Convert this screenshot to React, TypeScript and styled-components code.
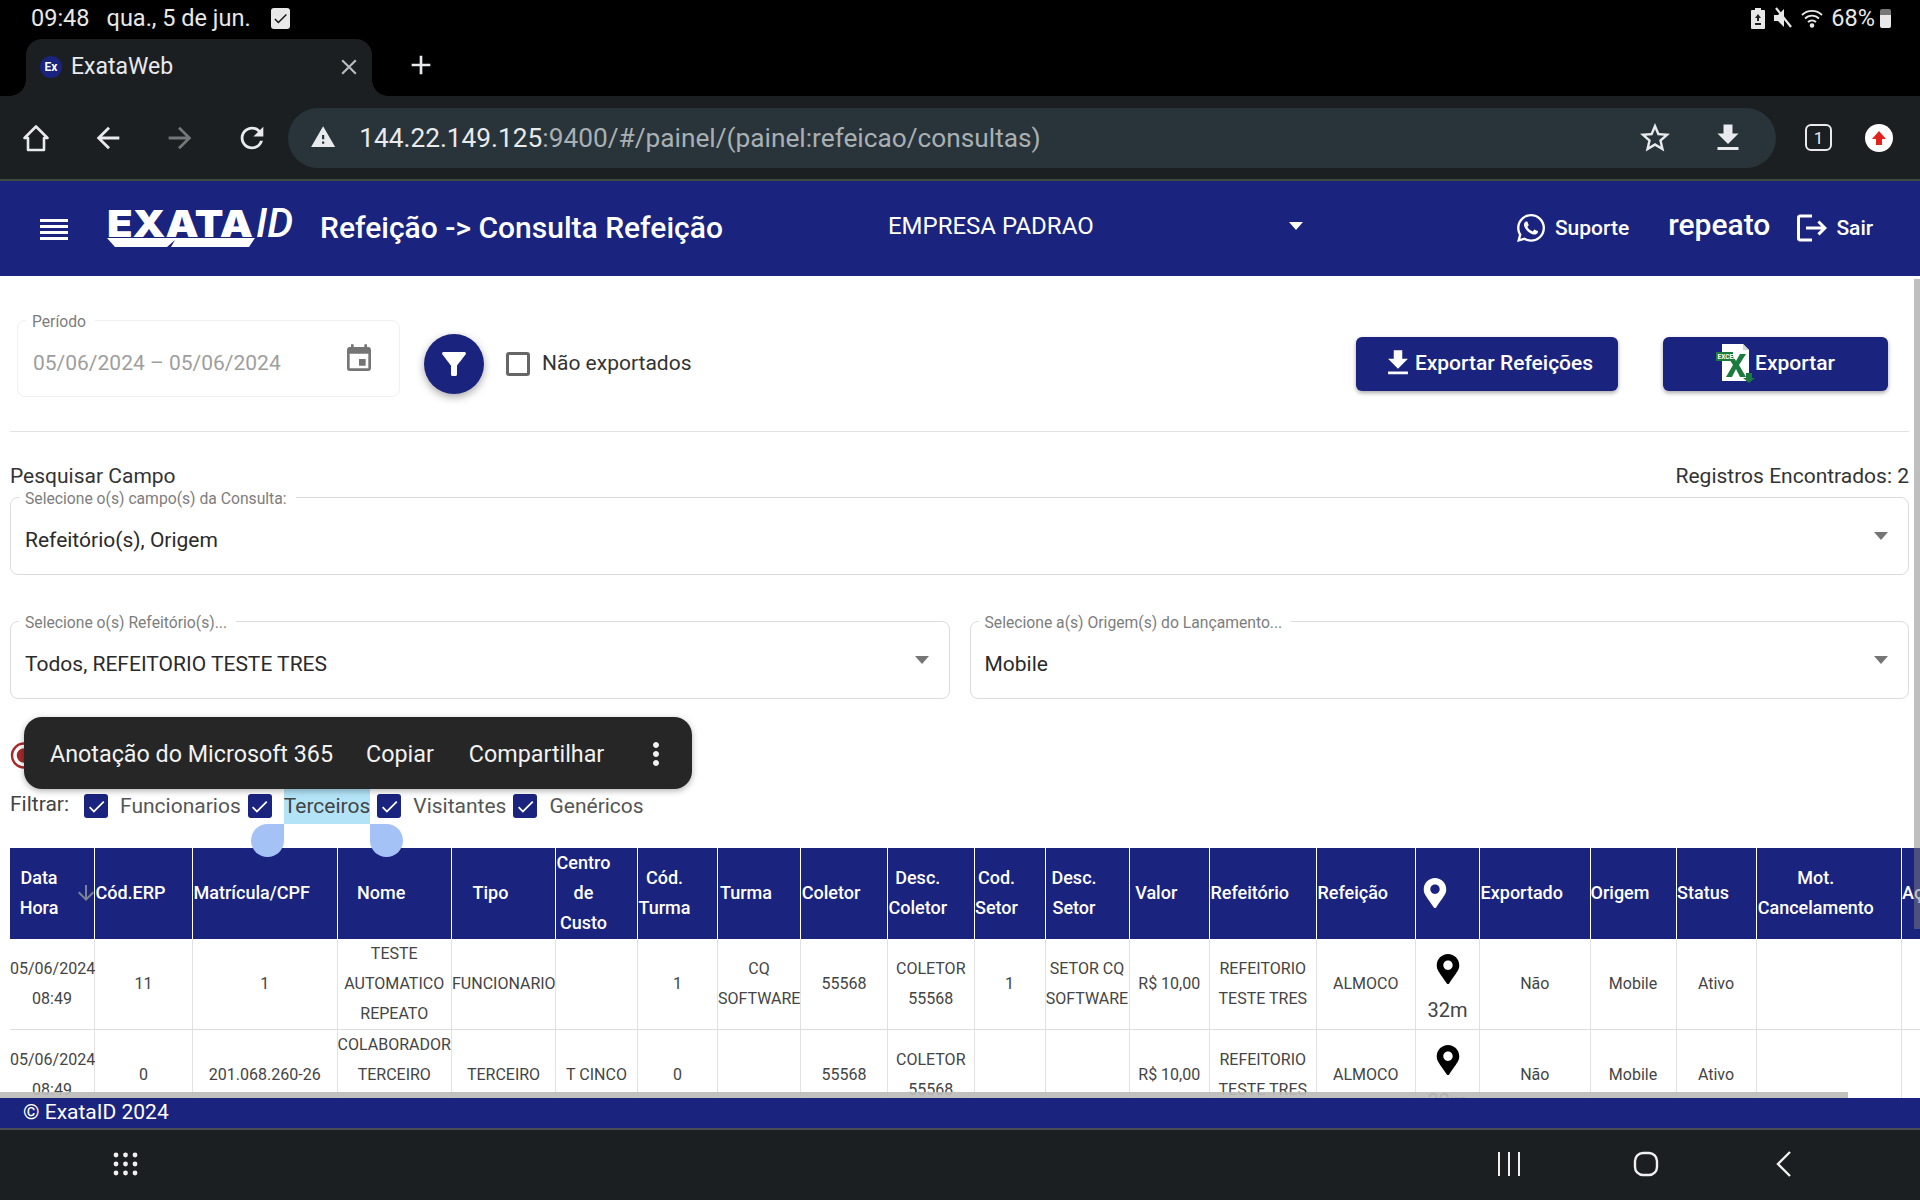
import React from 'react';
import styled, { createGlobalStyle } from 'styled-components';
import { FaWhatsapp, FaMapMarkerAlt } from 'react-icons/fa';
import { MdEvent, MdFilterAlt, MdFileDownload, MdLogout, MdStarBorder, MdRefresh, MdArrowBack, MdArrowForward, MdWarning, MdCheck, MdAdd, MdClose, MdMoreVert, MdArrowDownward } from 'react-icons/md';

const BLUE = '#1a237e';

const GlobalStyle = createGlobalStyle`
  html, body {
    margin: 0;
    padding: 0;
    background: #000;
    font-family: Roboto, "Liberation Sans", sans-serif;
  }
  * { box-sizing: border-box; }
`;

const Page = styled.div`
  width: 1920px;
  height: 1200px;
  display: flex;
  flex-direction: column;
  overflow: hidden;
  background: #fff;
`;

/* android status bar */
const StatusBar = styled.div`
  height: 36px;
  background: #000;
  color: #e8e8e8;
  display: flex;
  align-items: center;
  padding: 0 29px 0 31px;
  font-size: 23.5px;
`;

const StatusDate = styled.span`
  margin-left: 17px;
`;

const NotifyCheck = styled.span`
  width: 19px;
  height: 21px;
  margin-left: 20px;
  background: #e8e8e8;
  border-radius: 3px;
  color: #111;
  display: flex;
  align-items: center;
  justify-content: center;
  font-size: 17px;
`;

const StatusRight = styled.div`
  margin-left: auto;
  display: flex;
  align-items: center;
  gap: 8px;
`;

const Battery = styled.span`
  width: 11px;
  height: 19px;
  margin-left: -3px;
  border-radius: 2px;
  background: linear-gradient(#777 0 32%, #e8e8e8 32% 100%);
`;

/* chrome tabs */
const TabStrip = styled.div`
  height: 60px;
  background: #000;
  display: flex;
  align-items: flex-end;
  padding-left: 26px;
`;

const Tab = styled.div`
  position: relative;
  width: 346px;
  height: 57px;
  background: #1b1f22;
  border-radius: 16px 16px 0 0;
  color: #e8eaed;
  display: flex;
  align-items: center;
  padding: 0 10px 2px 14px;
  font-size: 23px;

  &::before,
  &::after {
    content: '';
    position: absolute;
    bottom: 0;
    width: 16px;
    height: 16px;
  }
  &::before {
    left: -16px;
    background: radial-gradient(circle at 0 0, #000 15.5px, #1b1f22 16px);
  }
  &::after {
    right: -16px;
    background: radial-gradient(circle at 100% 0, #000 15.5px, #1b1f22 16px);
  }
`;

const Favicon = styled.span`
  width: 22px;
  height: 22px;
  border-radius: 50%;
  background: #1a237e;
  color: #fff;
  font-size: 12px;
  font-weight: 700;
  display: flex;
  align-items: center;
  justify-content: center;
  margin-right: 9px;
`;

const TabClose = styled.span`
  margin-left: auto;
  color: #b8bbbf;
  font-size: 26px;
  display: flex;
`;

const NewTab = styled.span`
  color: #e8eaed;
  font-size: 32px;
  margin: 0 0 15px 33px;
  align-self: flex-end;
  display: flex;
`;

/* chrome toolbar */
const Toolbar = styled.div`
  height: 85px;
  background: #1b1f22;
  border-bottom: 2px solid #3f4a3f;
  display: flex;
  align-items: center;
  padding-left: 22px;
  color: #e8eaed;
`;

const ToolIcon = styled.span<{ $w: number; $dim?: boolean }>`
  width: ${p => p.$w}px;
  display: flex;
  font-size: 34px;
  color: ${p => (p.$dim ? '#73777b' : '#e8eaed')};
`;

const Omnibox = styled.div`
  width: 1488px;
  height: 60px;
  margin-left: 14px;
  background: #28343a;
  border-radius: 30px;
  display: flex;
  align-items: center;
  padding: 0 30px 0 22px;
  font-size: 26.25px;
  color: #e8eaed;
`;

const UrlHost = styled.span`
  margin-left: 23px;
`;

const UrlRest = styled.span`
  color: #a9b0b4;
`;

const OmniIcons = styled.div`
  margin-left: auto;
  display: flex;
  align-items: center;
  gap: 37px;
  font-size: 36px;
`;

const TabCount = styled.span`
  width: 27px;
  height: 27px;
  margin-left: 29px;
  border: 2px solid #e8eaed;
  border-radius: 6px;
  font-size: 17px;
  display: flex;
  align-items: center;
  justify-content: center;
`;

const Profile = styled.span`
  width: 28px;
  height: 28px;
  margin-left: 33px;
  border-radius: 50%;
  background: #fff;
  display: flex;
  align-items: center;
  justify-content: center;
`;

/* app header */
const AppHeader = styled.header`
  height: 95px;
  background: ${BLUE};
  color: #fff;
  display: flex;
  align-items: center;
  padding-left: 40px;
`;

const MenuBars = styled.svg`
  flex: none;
`;

const Logo = styled.div`
  position: relative;
  width: 189px;
  height: 44px;
  margin-left: 39px;
  display: flex;
  align-items: flex-start;
  line-height: 33px;
`;

const LogoMain = styled.span`
  display: inline-block;
  width: 149px;
  font-family: Inter, sans-serif;
  font-weight: 900;
  font-size: 37px;
  transform: scaleX(1.13);
  transform-origin: left center;
`;

const LogoId = styled.span`
  font-family: Roboto, sans-serif;
  font-style: italic;
  font-weight: 500;
  font-size: 41px;
`;

const LogoRibbon = styled.svg`
  position: absolute;
  left: 0;
  bottom: 0;
`;

const PageTitle = styled.h1`
  margin: -3px 0 0 24px;
  font-size: 30px;
  font-weight: 500;
`;

const CompanySelect = styled.div`
  width: 415px;
  margin-left: 165px;
  display: flex;
  align-items: center;
  justify-content: space-between;
  font-size: 24px;
  margin-top: -5px;
`;

const WhiteCaret = styled.span`
  width: 0;
  height: 0;
  border-left: 7px solid transparent;
  border-right: 7px solid transparent;
  border-top: 8px solid #fff;
`;

const HeaderRight = styled.div`
  margin-left: 212px;
  display: flex;
  align-items: center;
  font-size: 21px;
  font-weight: 500;
  margin-top: -2px;
`;

const HeaderIcon = styled.span<{ $size: number; $gap: number }>`
  display: flex;
  font-size: ${p => p.$size}px;
  margin-right: ${p => p.$gap}px;
`;

const UserName = styled.span`
  font-size: 30px;
  margin: -6px 24px 0 39px;
`;

/* content area */
const Content = styled.main`
  position: relative;
  flex: 1;
  min-height: 0;
  overflow: hidden;
  padding: 0 11px 0 10px;
  color: #333;
`;

const FiltersRow = styled.div`
  display: flex;
  align-items: center;
  padding: 58px 21px 37px 7px;
  border-bottom: 1px solid #e2e2e2;
`;

const OutlinedField = styled.div<{ $faint?: boolean }>`
  position: relative;
  height: 78px;
  flex: 1;
  border: 1px solid ${p => (p.$faint ? '#f0f0f0' : '#dcdcdc')};
  border-radius: 8px;
  display: flex;
  align-items: center;
  padding: 8px 20px 0 14px;
  font-size: 21px;
  color: #2a2a2a;
`;

const DateField = styled(OutlinedField)`
  flex: none;
  width: 383px;
  height: 77px;
  margin: -14px 0 -3px;
  color: #9e9e9e;
  font-size: 21px;
  padding-right: 24px;
  padding-left: 15px;
`;

const FieldLabel = styled.label`
  position: absolute;
  top: -8px;
  left: 8px;
  padding: 0 9px 0 6px;
  background: #fff;
  color: #7d7d7d;
  font-size: 15.7px;
  line-height: 17px;
`;

const CalendarIcon = styled.span`
  margin-left: auto;
  margin-top: -8px;
  display: flex;
  font-size: 32px;
  color: #757575;
`;

const FieldCaret = styled.span`
  margin-left: auto;
  margin-top: -8px;
  width: 0;
  height: 0;
  border-left: 7px solid transparent;
  border-right: 7px solid transparent;
  border-top: 8px solid #757575;
`;

const FilterFab = styled.button`
  width: 60px;
  height: 60px;
  margin-left: 24px;
  padding: 0;
  border: 0;
  border-radius: 50%;
  background: ${BLUE};
  color: #fff;
  font-size: 36px;
  display: flex;
  align-items: center;
  justify-content: center;
  box-shadow: 0 3px 8px rgba(0, 0, 0, 0.35);
`;

const PlainCheck = styled.span`
  width: 24px;
  height: 24px;
  margin-left: 22px;
  border: 3px solid #666;
  border-radius: 3px;
`;

const CheckText = styled.span`
  margin: -3px 0 0 12px;
  font-size: 21px;
  color: #333;
`;

const ExportButton = styled.button<{ $w: number }>`
  width: ${p => p.$w}px;
  height: 54px;
  border: 0;
  border-radius: 6px;
  background: ${BLUE};
  color: #fff;
  font-family: inherit;
  font-size: 21px;
  font-weight: 500;
  display: flex;
  align-items: center;
  justify-content: center;
  padding-bottom: 4px;
  box-shadow: 0 2px 4px rgba(0, 0, 0, 0.35);
`;

const ButtonGroup = styled.div`
  margin-left: auto;
  display: flex;
  gap: 45px;
`;

const SearchHead = styled.div`
  display: flex;
  justify-content: space-between;
  margin-top: 32px;
  font-size: 21px;
  line-height: 24px;
`;

const FieldRow = styled.div<{ $top: number }>`
  display: flex;
  gap: 20px;
  margin-top: ${p => p.$top}px;
`;

const TargetRow = styled.div`
  height: 27px;
  margin-top: 43px;
  display: flex;
`;

const FilterLine = styled.div`
  display: flex;
  align-items: center;
  height: 24px;
  margin-top: 25px;
  font-size: 21px;
  color: #555;
`;

const FilterLabel = styled.span`
  margin: -4px 15px 0 0;
  color: #444;
`;

const TickBox = styled.span`
  width: 24px;
  height: 24px;
  border-radius: 3px;
  background: ${BLUE};
  color: #fff;
  font-size: 21px;
  display: flex;
  align-items: center;
  justify-content: center;
`;

const TickText = styled.span`
  margin: 0 7px 0 12px;
`;

const Selected = styled(TickText)`
  position: relative;
  margin-top: -4px;
  padding: 10px 0 6px;
  background: #b3e3f7;
  color: #444;
`;

const Handle = styled.i<{ $side: 'left' | 'right' }>`
  position: absolute;
  top: 100%;
  ${p => (p.$side === 'left' ? 'right: 100%;' : 'left: 100%;')}
  width: 33px;
  height: 33px;
  background: #a4c2f6;
  z-index: 3;
  border-radius: ${p => (p.$side === 'left' ? '50% 0 50% 50%' : '0 50% 50% 50%')};
`;

/* table */
const TableWrap = styled.div`
  margin: 30px -11px 0 0;
  overflow: hidden;
`;

const Table = styled.table`
  width: 1952px;
  table-layout: fixed;
  border-collapse: separate;
  border-spacing: 0;
`;

const Col = styled.col<{ $w: number }>`
  width: ${p => p.$w}px;
`;

const Th = styled.th`
  height: 91px;
  padding: 0;
  background: ${BLUE};
  color: #fff;
  font-size: 18px;
  font-weight: 500;
  line-height: 30px;
  border-right: 1px solid #fff;
`;

const ThInner = styled.div`
  position: relative;
  top: -1px;
  display: flex;
  align-items: center;
`;

const ThLabel = styled.span`
  flex: 1;
  min-width: 0;
  text-align: center;
  white-space: normal;
`;

const SortSlot = styled.span`
  position: relative;
  left: 4px;
  width: 26px;
  flex: none;
  display: flex;
  justify-content: flex-end;
  color: #7d8296;
  font-size: 24px;
`;

const HeadPin = styled.span`
  display: flex;
  justify-content: center;
  font-size: 30px;
`;

const Td = styled.td`
  height: 90px;
  padding: 0;
  text-align: center;
  font-size: 16px;
  line-height: 30px;
  color: #444;
  border-right: 1px solid #e2e2e2;
  border-bottom: 1px solid #dcdcdc;
`;

const PinTd = styled(Td)`
  vertical-align: top;
  padding-top: 15px;
  font-size: 20px;
  line-height: 28px;
  color: #444;
`;

const PinIcon = styled.span`
  display: flex;
  justify-content: center;
  color: #000;
  font-size: 30px;
  height: 42px;
  padding-bottom: 12px;
`;

const HScroll = styled.div`
  position: absolute;
  left: 0;
  bottom: 0;
  width: 1848px;
  height: 6px;
  background: rgba(188, 188, 184, 0.92);
`;

const VScroll = styled.div`
  position: absolute;
  right: 0;
  top: 3px;
  width: 6px;
  height: 650px;
  background: rgba(128, 128, 128, 0.5);
`;

/* text selection popup */
const SelectionMenu = styled.div`
  position: absolute;
  left: 24px;
  top: 441px;
  width: 668px;
  height: 72px;
  z-index: 4;
  border-radius: 18px;
  background: #262626;
  color: #f2f2f2;
  display: flex;
  align-items: center;
  padding: 1px 0 0 26px;
  font-size: 23.3px;
  box-shadow: 0 2px 6px rgba(0, 0, 0, 0.3);
`;

const MenuItem = styled.span<{ $gap: number }>`
  margin-right: ${p => p.$gap}px;
`;

const MenuDots = styled.span`
  display: flex;
  font-size: 36px;
  margin-left: 2px;
`;

/* footer + android nav */
const Footer = styled.footer`
  height: 32px;
  background: ${BLUE};
  border-bottom: 2px solid #4a4d55;
  color: #fff;
  font-size: 21px;
  line-height: 28px;
  padding-left: 23px;
`;

const NavBar = styled.nav`
  height: 70px;
  background: #1b1f22;
  display: flex;
  align-items: center;
  padding: 0 128px 2px 113px;
`;

const NavIcon = styled.svg<{ $left?: number }>`
  margin-left: ${p => p.$left ?? 0}px;
  flex: none;
`;

const columns: { label: string; w: number; sort?: boolean }[] = [
  { label: 'Data Hora', w: 85, sort: true },
  { label: 'Cód.ERP', w: 98 },
  { label: 'Matrícula/CPF', w: 144.5 },
  { label: 'Nome', w: 114.5 },
  { label: 'Tipo', w: 104 },
  { label: 'Centro de Custo', w: 82 },
  { label: 'Cód. Turma', w: 80 },
  { label: 'Turma', w: 83 },
  { label: 'Coletor', w: 87 },
  { label: 'Desc. Coletor', w: 86.5 },
  { label: 'Cod. Setor', w: 71 },
  { label: 'Desc. Setor', w: 84 },
  { label: 'Valor', w: 80.5 },
  { label: 'Refeitório', w: 106.5 },
  { label: 'Refeição', w: 99.5 },
  { label: 'PIN', w: 64 },
  { label: 'Exportado', w: 110.5 },
  { label: 'Origem', w: 86 },
  { label: 'Status', w: 80 },
  { label: 'Mot. Cancelamento', w: 145.5 },
  { label: 'Ação', w: 60 },
];

const rows: string[][] = [
  ['05/06/2024 08:49', '11', '1', 'TESTE AUTOMATICO REPEATO', 'FUNCIONARIO', '', '1', 'CQ SOFTWARE', '55568', 'COLETOR 55568', '1', 'SETOR CQ SOFTWARE', 'R$ 10,00', 'REFEITORIO TESTE TRES', 'ALMOCO', 'PIN', 'Não', 'Mobile', 'Ativo', '', ''],
  ['05/06/2024 08:49', '0', '201.068.260-26', 'COLABORADOR TERCEIRO CINCO', 'TERCEIRO', 'T CINCO', '0', '', '55568', 'COLETOR 55568', '', '', 'R$ 10,00', 'REFEITORIO TESTE TRES', 'ALMOCO', 'PIN', 'Não', 'Mobile', 'Ativo', '', ''],
];

const tickFilters = ['Funcionarios', 'Terceiros', 'Visitantes', 'Genéricos'];

function ExcelIcon() {
  return (
    <svg width="40" height="40" viewBox="0 0 40 40" style={{ marginRight: -1 }}>
      <path d="M6 1h21l6 6v31H6z" fill="#fff" />
      <path d="M27 1l6 6h-6z" fill="#cfd3d6" />
      <path d="M10 11l6 0 4 7 4-7 6 0-7 11 7 12-6 0-4-8-4 8-6 0 7-12z" fill="#1b7a3d" />
      <path d="M0 9h17v9H0z" fill="#1b7a3d" />
      <text x="1.5" y="16" fontSize="6.5" fontWeight="700" fill="#fff" fontFamily="Roboto">EXCEL</text>
      <path d="M30 30h6v5h3l-6 5-6-5h3z" fill="#1b7a3d" />
    </svg>
  );
}

function HomeGlyph() {
  return (
    <svg width="28" height="28" viewBox="0 0 28 28" fill="none" stroke="#e8eaed" strokeWidth="2.6" strokeLinejoin="round">
      <path d="M14 2.5L2.5 14H6v12h16V14h3.5z" />
    </svg>
  );
}

export default function App() {
  return (
    <Page>
      <GlobalStyle />
      <StatusBar>
        <span>09:48</span>
        <StatusDate>qua., 5 de jun.</StatusDate>
        <NotifyCheck><MdCheck /></NotifyCheck>
        <StatusRight>
          <svg width="14" height="22" viewBox="0 0 14 22">
            <path d="M4 1h6v2h3a1 1 0 0 1 1 1v17a1 1 0 0 1-1 1H1a1 1 0 0 1-1-1V4a1 1 0 0 1 1-1h3z" fill="#e8e8e8" />
            <path d="M7 7l3 4H8v3H6v-3H4zM4 16h6v2H4z" fill="#222" />
          </svg>
          <svg width="20" height="22" viewBox="0 0 20 22">
            <path d="M1 8h4l6-6v18l-6-6H1z" fill="#e8e8e8" />
            <path d="M3 1l15 19" stroke="#e8e8e8" strokeWidth="2.2" />
          </svg>
          <svg width="22" height="22" viewBox="0 0 22 22" fill="none" stroke="#e8e8e8" strokeWidth="1.8">
            <path d="M1 8a14 14 0 0 1 20 0M4 11.5a10 10 0 0 1 14 0M7 15a6 6 0 0 1 8 0" />
            <circle cx="11" cy="18.5" r="1.4" fill="#e8e8e8" />
          </svg>
          <span>68%</span>
          <Battery />
        </StatusRight>
      </StatusBar>

      <TabStrip>
        <Tab>
          <Favicon>Ex</Favicon>
          ExataWeb
          <TabClose><MdClose /></TabClose>
        </Tab>
        <NewTab><MdAdd /></NewTab>
      </TabStrip>

      <Toolbar>
        <ToolIcon $w={69}><HomeGlyph /></ToolIcon>
        <ToolIcon $w={72}><MdArrowBack /></ToolIcon>
        <ToolIcon $w={72} $dim><MdArrowForward /></ToolIcon>
        <ToolIcon $w={39}><MdRefresh /></ToolIcon>
        <Omnibox>
          <MdWarning />
          <UrlHost>144.22.149.125<UrlRest>:9400/#/painel/(painel:refeicao/consultas)</UrlRest></UrlHost>
          <OmniIcons>
            <MdStarBorder />
            <MdFileDownload />
          </OmniIcons>
        </Omnibox>
        <TabCount>1</TabCount>
        <Profile>
          <svg width="16" height="16" viewBox="0 0 16 16">
            <path d="M8 1l7 8h-4v6H5V9H1z" fill="#e3231b" />
          </svg>
        </Profile>
      </Toolbar>

      <AppHeader>
        <MenuBars width="28" height="22" viewBox="0 0 28 22" fill="#fff">
          <path d="M0 1h28v3H0zM0 7h28v3H0zM0 13h28v3H0zM0 19h28v3H0z" />
        </MenuBars>
        <Logo>
          <LogoMain>EXATA</LogoMain>
          <LogoId>ID</LogoId>
          <LogoRibbon width="150" height="14" viewBox="0 0 150 14">
            <path d="M0 1h148l-6 9H64l4-7-8 7H8z" fill="#fff" />
          </LogoRibbon>
        </Logo>
        <PageTitle>Refeição -&gt; Consulta Refeição</PageTitle>
        <CompanySelect>
          EMPRESA PADRAO
          <WhiteCaret />
        </CompanySelect>
        <HeaderRight>
          <HeaderIcon $size={32} $gap={8}><FaWhatsapp /></HeaderIcon>
          Suporte
          <UserName>repeato</UserName>
          <HeaderIcon $size={36} $gap={6}><MdLogout /></HeaderIcon>
          Sair
        </HeaderRight>
      </AppHeader>

      <Content>
        <FiltersRow>
          <DateField $faint>
            <FieldLabel>Período</FieldLabel>
            05/06/2024 – 05/06/2024
            <CalendarIcon><MdEvent /></CalendarIcon>
          </DateField>
          <FilterFab><MdFilterAlt /></FilterFab>
          <PlainCheck />
          <CheckText>Não exportados</CheckText>
          <ButtonGroup>
            <ExportButton $w={262}>
              <MdFileDownload size={34} />
              Exportar Refeições
            </ExportButton>
            <ExportButton $w={225}>
              <ExcelIcon />
              Exportar
            </ExportButton>
          </ButtonGroup>
        </FiltersRow>

        <SearchHead>
          <span>Pesquisar Campo</span>
          <span>Registros Encontrados: 2</span>
        </SearchHead>
        <FieldRow $top={9}>
          <OutlinedField>
            <FieldLabel>Selecione o(s) campo(s) da Consulta:</FieldLabel>
            Refeitório(s), Origem
            <FieldCaret />
          </OutlinedField>
        </FieldRow>
        <FieldRow $top={46}>
          <OutlinedField>
            <FieldLabel>Selecione o(s) Refeitório(s)...</FieldLabel>
            Todos, REFEITORIO TESTE TRES
            <FieldCaret />
          </OutlinedField>
          <OutlinedField>
            <FieldLabel>Selecione a(s) Origem(s) do Lançamento...</FieldLabel>
            Mobile
            <FieldCaret />
          </OutlinedField>
        </FieldRow>

        <TargetRow>
          <svg width="28" height="27" viewBox="0 0 28 27" fill="none" stroke="#a52a2a" strokeWidth="2.5">
            <circle cx="14" cy="13.5" r="12" />
            <circle cx="14" cy="13.5" r="6" fill="#a52a2a" />
          </svg>
        </TargetRow>

        <FilterLine>
          <FilterLabel>Filtrar:</FilterLabel>
          {tickFilters.map(name => (
            <React.Fragment key={name}>
              <TickBox><MdCheck /></TickBox>
              {name === 'Terceiros' ? (
                <Selected>
                  {name}
                  <Handle $side="left" />
                  <Handle $side="right" />
                </Selected>
              ) : (
                <TickText>{name}</TickText>
              )}
            </React.Fragment>
          ))}
        </FilterLine>

        <TableWrap>
          <Table>
            <colgroup>
              {columns.map(c => <Col key={c.label} $w={c.w} />)}
            </colgroup>
            <thead>
              <tr>
                {columns.map(c => (
                  <Th key={c.label}>
                    <ThInner>
                      <ThLabel>
                        {c.label === 'PIN' ? <HeadPin><FaMapMarkerAlt /></HeadPin> : c.label}
                      </ThLabel>
                      <SortSlot>{c.sort ? <MdArrowDownward /> : null}</SortSlot>
                    </ThInner>
                  </Th>
                ))}
              </tr>
            </thead>
            <tbody>
              {rows.map((row, i) => (
                <tr key={i}>
                  {row.map((cell, j) => (
                    cell === 'PIN' ? (
                      <PinTd key={j}>
                        <PinIcon><FaMapMarkerAlt /></PinIcon>
                        32m
                      </PinTd>
                    ) : (
                      <Td key={j}>{cell}</Td>
                    )
                  ))}
                </tr>
              ))}
            </tbody>
          </Table>
        </TableWrap>

        <HScroll />
        <VScroll />

        <SelectionMenu>
          <MenuItem $gap={33}>Anotação do Microsoft 365</MenuItem>
          <MenuItem $gap={35}>Copiar</MenuItem>
          <MenuItem $gap={32}>Compartilhar</MenuItem>
          <MenuDots><MdMoreVert /></MenuDots>
        </SelectionMenu>
      </Content>

      <Footer>© ExataID 2024</Footer>

      <NavBar>
        <NavIcon width="25" height="24" viewBox="0 0 25 24" fill="#f0f0f0">
          {[3, 12.5, 22].map(x => [3, 12, 21].map(y => <circle key={`${x}-${y}`} cx={x} cy={y} r="2.4" />))}
        </NavIcon>
        <NavIcon $left={1359} width="24" height="24" viewBox="0 0 24 24" stroke="#f0f0f0" strokeWidth="2">
          <path d="M2 0v24M12 0v24M22 0v24" />
        </NavIcon>
        <NavIcon $left={112} width="26" height="26" viewBox="0 0 26 26" fill="none" stroke="#f0f0f0" strokeWidth="2.4">
          <rect x="2" y="2" width="22" height="22" rx="8" />
        </NavIcon>
        <NavIcon $left={117} width="16" height="26" viewBox="0 0 16 26" fill="none" stroke="#f0f0f0" strokeWidth="2.4">
          <path d="M14 1L2 13l12 12" />
        </NavIcon>
      </NavBar>
    </Page>
  );
}
